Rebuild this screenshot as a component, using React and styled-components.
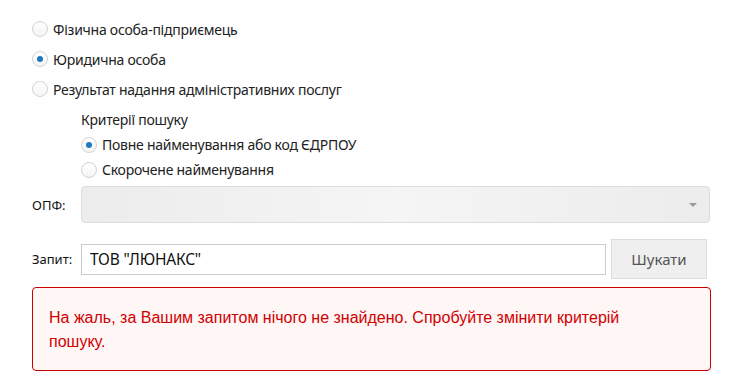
import React from "react";
import styled, { createGlobalStyle } from "styled-components";

const Global = createGlobalStyle`
  html, body { margin: 0; padding: 0; background: #fff; }
  body { font-family: "Noto Sans", "Open Sans", sans-serif; color: #222; }
`;

const Page = styled.div`
  width: 679px;
  padding: 14px 0 0 32px;
  box-sizing: content-box;
`;

const RadioRow = styled.label`
  display: flex;
  align-items: center;
  height: ${(p) => p.$h || 30}px;
  gap: 5px;
  font-size: 14px;
  letter-spacing: -0.25px;
  color: #222;
  cursor: pointer;
`;

const RadioCircle = styled.span`
  width: 16px;
  height: 16px;
  box-sizing: border-box;
  border-radius: 50%;
  border: 1px solid #d2d2d2;
  background: linear-gradient(#fff, #f4f4f4);
  display: flex;
  align-items: center;
  justify-content: center;
  flex: none;
  &::after {
    content: "";
    display: ${(p) => (p.$checked ? "block" : "none")};
    width: 6px;
    height: 6px;
    border-radius: 50%;
    background: #1c79bd;
  }
`;

const Criteria = styled.div`
  margin: 4px 0 0 49px;
`;

const CriteriaTitle = styled.div`
  font-size: 14px;
  letter-spacing: -0.25px;
  line-height: 24px;
  color: #222;
`;

const FormRow = styled.div`
  display: flex;
  align-items: center;
  margin-top: ${(p) => p.$mt || 0}px;
`;

const FieldLabel = styled.div`
  width: 49px;
  flex: none;
  font-size: 13px;
  color: #111;
`;

const Select = styled.div`
  flex: 1;
  height: 37px;
  box-sizing: border-box;
  border: 1px solid #dcdcdc;
  border-radius: 4px;
  background: linear-gradient(90deg, #ececec, #f5f5f5 50%, #ececec);
  position: relative;
  margin-right: 1px;
`;

const Caret = styled.span`
  position: absolute;
  right: 12px;
  top: 16px;
  width: 0;
  height: 0;
  border-left: 4px solid transparent;
  border-right: 4px solid transparent;
  border-top: 4px solid #999;
`;

const Input = styled.input`
  flex: 1;
  height: 31px;
  box-sizing: border-box;
  border: 1px solid #ccc;
  padding: 0 8px;
  font-family: "Noto Sans", sans-serif;
  font-size: 15.5px;
  letter-spacing: -0.2px;
  color: #111;
  outline: none;
`;

const Button = styled.button`
  width: 96px;
  height: 40px;
  margin: 0 4px 0 5px;
  box-sizing: border-box;
  border: 1px solid #ddd;
  background: #efefef;
  font-family: "Noto Sans", sans-serif;
  font-size: 15px;
  color: #555;
  cursor: pointer;
`;

const ErrorBox = styled.div`
  margin-top: 8px;
  height: 84px;
  box-sizing: border-box;
  border: 1px solid #cc0000;
  border-radius: 4px;
  background: #fff6f6;
  padding: 18px 40px 0 16px;
  font-family: "Liberation Sans", Arial, sans-serif;
  font-size: 16px;
  line-height: 24px;
  color: #d00000;
`;

function Radio({ checked, children, h }) {
  return (
    <RadioRow $h={h}>
      <RadioCircle $checked={checked} />
      {children}
    </RadioRow>
  );
}

export default function App() {
  return (
    <>
      <Global />
      <Page>
        <Radio>Фізична особа-підприємець</Radio>
        <Radio checked>Юридична особа</Radio>
        <Radio>Результат надання адміністративних послуг</Radio>
        <Criteria>
          <CriteriaTitle>Критерії пошуку</CriteriaTitle>
          <Radio checked h={25}>Повне найменування або код ЄДРПОУ</Radio>
          <Radio h={25}>Скорочене найменування</Radio>
        </Criteria>
        <FormRow $mt={4}>
          <FieldLabel>ОПФ:</FieldLabel>
          <Select>
            <Caret />
          </Select>
        </FormRow>
        <FormRow $mt={16}>
          <FieldLabel>Запит:</FieldLabel>
          <Input defaultValue={'ТОВ "ЛЮНАКС"'} />
          <Button>Шукати</Button>
        </FormRow>
        <ErrorBox>
          На жаль, за Вашим запитом нічого не знайдено. Спробуйте змінити критерій пошуку.
        </ErrorBox>
      </Page>
    </>
  );
}
